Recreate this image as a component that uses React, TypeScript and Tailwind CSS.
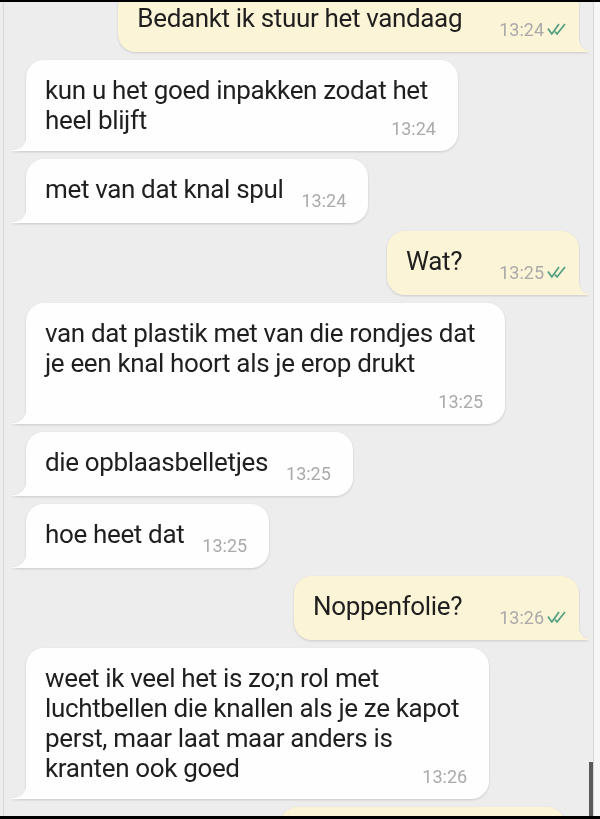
import React from "react";

type Msg = {
    text: string;
    time: string;
    out?: boolean;
    multi?: boolean;
    extraLine?: boolean;
};

const messages: Msg[] = [
    { out: true, text: "Bedankt ik stuur het vandaag", time: "13:24" },
    { text: "kun u het goed inpakken zodat het\nheel blijft", time: "13:24", multi: true },
    { text: "met van dat knal spul", time: "13:24" },
    { out: true, text: "Wat?", time: "13:25" },
    {
        text: "van dat plastik met van die rondjes dat\nje een knal hoort als je erop drukt",
        time: "13:25",
        multi: true,
        extraLine: true,
    },
    { text: "die opblaasbelletjes", time: "13:25" },
    { text: "hoe heet dat", time: "13:25" },
    { out: true, text: "Noppenfolie?", time: "13:26" },
    {
        text: "weet ik veel het is zo;n rol met\nluchtbellen die knallen als je ze kapot\nperst, maar laat maar anders is\nkranten ook goed",
        time: "13:26",
        multi: true,
    },
];

function Ticks() {
    return (
        <svg width="21" height="12" viewBox="0 0 21 12" className="ml-[3px] mb-[5px]">
            <path d="M1 5.5 L4.8 11 L12 1" fill="none" stroke="#4f9f80" strokeWidth="1.7" strokeLinejoin="round" />
            <path d="M8 8.5 L10 11 L18 1" fill="none" stroke="#4f9f80" strokeWidth="1.7" strokeLinejoin="round" />
        </svg>
    );
}

function Tail({ out }: { out?: boolean }) {
    if (out) {
        return (
            <svg width="13" height="18" viewBox="0 0 13 18" className="absolute bottom-0 right-[-12px]">
                <path d="M0 0 Q0 16 13 18 L0 18 Z" fill="#fcf4d6" />
            </svg>
        );
    }
    return (
        <svg width="17" height="18" viewBox="0 0 17 18" className="absolute bottom-0 left-[-16px]">
            <path d="M17 0 Q17 16 0 18 L17 18 Z" fill="#fefefe" />
        </svg>
    );
}

function Time({ msg }: { msg: Msg }) {
    return (
        <div className="flex items-end shrink-0">
            <span className="text-[18px] leading-[20px] text-[#aaaaaa]">{msg.time}</span>
            {msg.out && <Ticks />}
        </div>
    );
}

function Bubble({ msg }: { msg: Msg }) {
    const lines = msg.text.split("\n");
    const side = msg.out
        ? "self-end mr-[14px] bg-[#fcf4d6] rounded-[18px] rounded-br-none pr-[11px]"
        : "self-start ml-[22px] bg-[#fefefe] rounded-[18px] rounded-bl-none pr-[22px]";
    const textCls = "text-[26px] leading-[30px] tracking-[-0.35px] text-[#1f1f1f]";

    return (
        <div className={`relative drop-shadow-[0_1px_1px_rgba(0,0,0,0.15)] ${side} pl-[19px] pt-[15px] pb-[12px]`}>
            {msg.multi ? (
                <div className="flex flex-col">
                    <div className={`${textCls} pr-[8px]`}>
                        {lines.map((l, i) => (
                            <div key={i}>{l}</div>
                        ))}
                        {msg.extraLine && <div className="h-[30px]" />}
                    </div>
                    <div className="self-end -mt-[16px]">
                        <Time msg={msg} />
                    </div>
                </div>
            ) : (
                <div className="flex items-end">
                    <div className={`${textCls} pb-[7px] whitespace-nowrap`}>{msg.text}</div>
                    <div className={msg.out ? "ml-[37px]" : "ml-[18px]"}>
                        <Time msg={msg} />
                    </div>
                </div>
            )}
            <Tail out={msg.out} />
        </div>
    );
}

export default function App() {
    return (
        <div
            className="w-[600px] h-[819px] bg-black pt-[2px] pb-[3px] flex flex-col"
            style={{ fontFamily: "Roboto, 'Noto Sans', sans-serif" }}
        >
            <div className="flex-1 flex overflow-hidden">
                <div className="w-[3px] bg-[#ececec]" />
                <div className="w-[1px] bg-[#d9d9d9]" />
                <div className="relative flex-1 bg-[#ededed] overflow-hidden">
                    <div className="flex flex-col gap-2 -mt-[14px]">
                        {messages.map((m, i) => (
                            <Bubble key={i} msg={m} />
                        ))}
                        <div className="self-end mr-[28px] w-[285px] h-[64px] bg-[#fcf4d6] rounded-[18px] drop-shadow-[0_1px_1px_rgba(0,0,0,0.15)]" />
                    </div>
                    <div className="absolute right-0 bottom-0 w-[4px] h-[54px] bg-[#5a5a5a]" />
                </div>
                <div className="w-[1px] bg-[#d6d6d6]" />
                <div className="w-[6px] bg-[#f6f6f6]" />
            </div>
        </div>
    );
}
